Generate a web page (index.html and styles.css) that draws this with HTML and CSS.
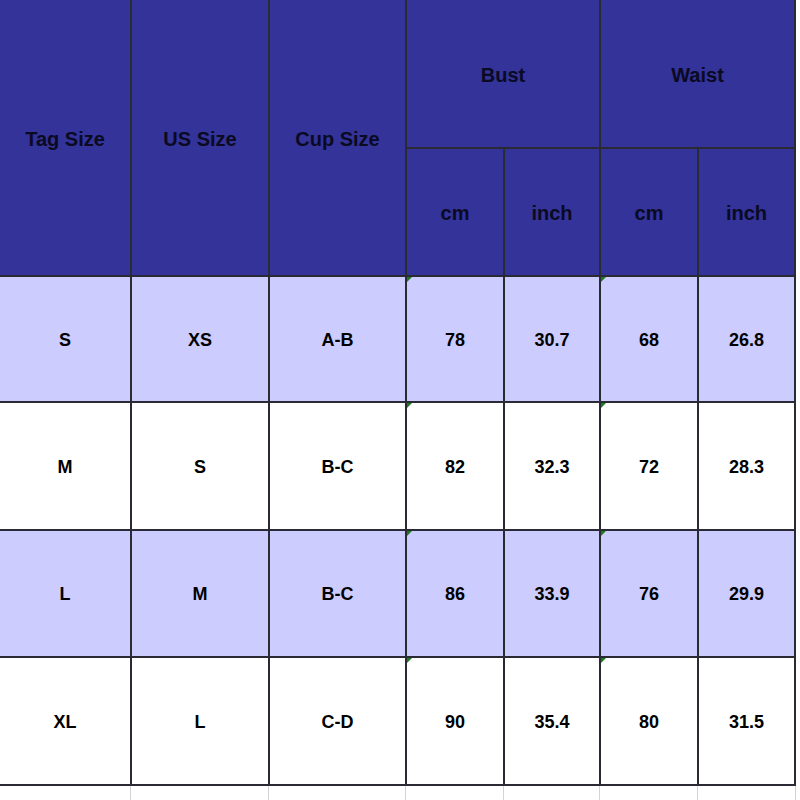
FILE: index.html
```html
<!DOCTYPE html>
<html>
<head>
<meta charset="utf-8">
<link rel="stylesheet" href="styles.css">
</head>
<body>
<div class="sheet">
  <div class="grid">
    <div class="cell head tall">Tag Size</div>
    <div class="cell head tall">US Size</div>
    <div class="cell head tall">Cup Size</div>
    <div class="cell head wide">Bust</div>
    <div class="cell head wide">Waist</div>
    <div class="cell head">cm</div>
    <div class="cell head">inch</div>
    <div class="cell head">cm</div>
    <div class="cell head">inch</div>

    <div class="cell alt">S</div>
    <div class="cell alt">XS</div>
    <div class="cell alt">A-B</div>
    <div class="cell alt flag">78</div>
    <div class="cell alt">30.7</div>
    <div class="cell alt flag">68</div>
    <div class="cell alt">26.8</div>

    <div class="cell">M</div>
    <div class="cell">S</div>
    <div class="cell">B-C</div>
    <div class="cell flag">82</div>
    <div class="cell">32.3</div>
    <div class="cell flag">72</div>
    <div class="cell">28.3</div>

    <div class="cell alt">L</div>
    <div class="cell alt">M</div>
    <div class="cell alt">B-C</div>
    <div class="cell alt flag">86</div>
    <div class="cell alt">33.9</div>
    <div class="cell alt flag">76</div>
    <div class="cell alt">29.9</div>

    <div class="cell">XL</div>
    <div class="cell">L</div>
    <div class="cell">C-D</div>
    <div class="cell flag">90</div>
    <div class="cell">35.4</div>
    <div class="cell flag">80</div>
    <div class="cell">31.5</div>
  </div>
  <div class="ticks">
    <span class="tick"></span>
    <span class="tick"></span>
    <span class="tick"></span>
    <span class="tick"></span>
    <span class="tick"></span>
    <span class="tick"></span>
    <span class="tick"></span>
  </div>
</div>
</body>
</html>
```

FILE: styles.css
```css
html, body {
  margin: 0;
  padding: 0;
  background: #ffffff;
}

.sheet {
  width: 800px;
  height: 800px;
  overflow: hidden;
  font-family: "Liberation Sans", Arial, sans-serif;
  font-weight: bold;
  color: #000;
}

.grid {
  display: grid;
  width: 794px;
  grid-template-columns: 130px 136px 135px 96px 94px 96px 95px;
  grid-template-rows: 147px 126px 124px 126px 125px 126px;
  gap: 2px;
  background: #2a2a34;
  border-right: 2px solid #2a2a34;
  border-bottom: 2px solid #2a2a34;
}

.cell {
  position: relative;
  display: flex;
  align-items: center;
  justify-content: center;
  padding-top: 2px;
  background: #ffffff;
  font-size: 18px;
}

.cell.alt {
  background: #ccccff;
}

.cell.head {
  background: #333399;
  font-size: 20px;
  padding-top: 3px;
  color: #0a0a22;
}

.cell.tall {
  grid-row: span 2;
}

.cell.wide {
  grid-column: span 2;
}

.cell.flag::before {
  content: "";
  position: absolute;
  left: 0;
  top: 0;
  width: 0;
  height: 0;
  border-top: 5px solid #1e7a1e;
  border-right: 5px solid transparent;
}

.ticks {
  display: grid;
  width: 798px;
  grid-template-columns: 131px 138px 137px 98px 96px 98px 98px;
  height: 14px;
}

.tick {
  border-right: 1px solid #d4d4d4;
}
```
